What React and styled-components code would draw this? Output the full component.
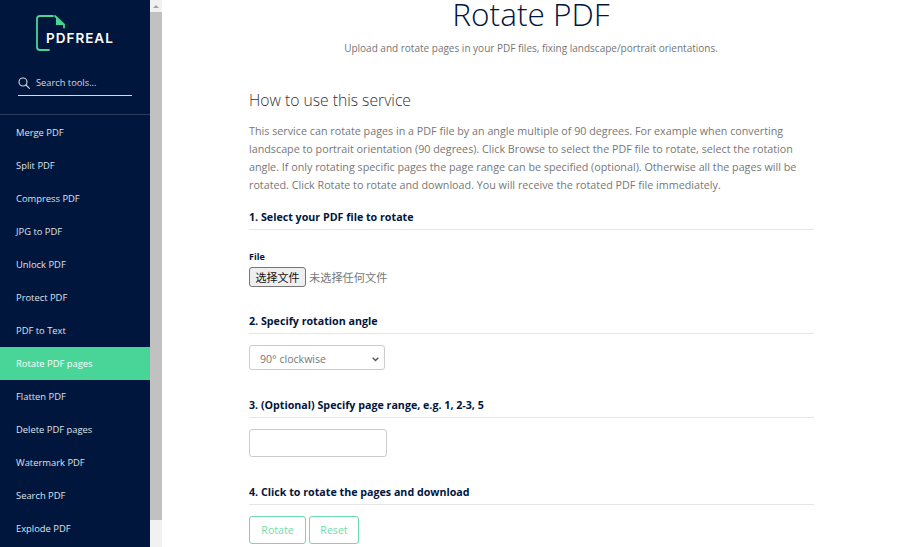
import React from 'react'
import styled, { createGlobalStyle } from 'styled-components'

const GlobalStyle = createGlobalStyle`
  html, body { margin: 0; padding: 0; height: 100%; overflow: hidden; background: #fff; }
  * { box-sizing: border-box; }
  body { font-family: "Open Sans", "Noto Sans", "Noto Sans CJK SC", sans-serif; }
`

const Page = styled.div`
  display: flex;
  width: 900px;
  height: 547px;
  overflow: hidden;
`

const Sidebar = styled.aside`
  width: 150px;
  flex: none;
  height: 547px;
  background: #01163d;
  overflow: hidden;
`

const Brand = styled.div`
  display: flex;
  padding: 15px 0 0 36px;
  height: 69px;
`

const LogoBox = styled.div`
  position: relative;
  width: 80px;
  height: 36px;
`

const LogoText = styled.span`
  position: absolute;
  left: 10px;
  top: 15px;
  font-family: "Inter", sans-serif;
  font-weight: 600;
  font-size: 13.5px;
  line-height: 16px;
  letter-spacing: 1px;
  color: #fff;
`

const SearchRow = styled.div`
  display: flex;
  align-items: center;
  gap: 6px;
  margin: 0 18px;
  height: 27px;
  padding-top: 1px;
  border-bottom: 1px solid #d5d9e2;
  color: #d5d9e2;
  font-size: 9.3px;
`

const Divider = styled.div`
  height: 1px;
  margin-top: 18px;
  background: #2b3c5c;
`

const NavList = styled.nav`
  display: flex;
  flex-direction: column;
  padding-top: 1px;
`

const NavItem = styled.a`
  display: flex;
  align-items: center;
  height: 33px;
  padding: 0 0 1px 16px;
  font-size: 9.4px;
  color: #dfe3ea;
  background: ${p => (p.$active ? '#48d597' : 'transparent')};
  ${p => p.$active && 'color: #fff;'}
`

const ScrollTrack = styled.div`
  width: 12px;
  flex: none;
  height: 547px;
  background: #f1f1f1;
  display: flex;
  flex-direction: column;
`

const ScrollArrow = styled.div`
  height: 12px;
  display: flex;
  align-items: center;
  justify-content: center;
  background: #f1f1f1;
  &::before {
    content: "";
    border-left: 3px solid transparent;
    border-right: 3px solid transparent;
    border-bottom: 3px solid #a3a3a3;
  }
`

const ScrollThumb = styled.div`
  height: 508px;
  background: #c1c1c1;
`

const Main = styled.main`
  flex: 1;
  height: 547px;
  overflow: hidden;
`

const Hero = styled.header`
  text-align: center;
  margin-top: -10px;
`

const Title = styled.h1`
  margin: 0;
  font-size: 31.6px;
  line-height: 48px;
  font-weight: 300;
  color: #01163d;
`

const Subtitle = styled.p`
  margin: 3px 0 0;
  font-size: 10px;
  line-height: 14px;
  color: #757575;
`

const Content = styled.div`
  width: 565px;
  margin-left: 87px;
`

const HowTitle = styled.h2`
  margin: 34px 0 0;
  font-size: 15.7px;
  line-height: 22px;
  font-weight: 300;
  color: #333;
`

const Description = styled.p`
  margin: 11px 0 0;
  font-size: 10.75px;
  line-height: 18px;
  color: #777;
`

const StepTitle = styled.h3`
  margin: ${p => p.$gap}px 0 0;
  padding-bottom: 5px;
  height: 20px;
  border-bottom: 1px solid #e6e6e6;
  font-size: 10.7px;
  line-height: 15px;
  font-weight: 700;
  color: #01163d;
`

const FieldLabel = styled.label`
  display: block;
  margin-top: 20px;
  font-size: 9px;
  line-height: 13px;
  font-weight: 700;
  color: #01163d;
`

const FileRow = styled.div`
  display: flex;
  align-items: center;
  gap: 3px;
  margin-top: 4px;
  height: 20px;
  font-size: 11.2px;
  color: #777;
  font-family: "Noto Sans CJK SC", sans-serif;
`

const FileButton = styled.button`
  width: 57px;
  height: 20px;
  padding: 0;
  border: 1px solid #767676;
  border-radius: 3px;
  background: #efefef;
  color: #111;
  font-size: 11px;
  font-family: "Noto Sans CJK SC", sans-serif;
`

const SelectBox = styled.div`
  display: flex;
  align-items: center;
  justify-content: space-between;
  width: 136px;
  height: 25px;
  margin-top: 11px;
  padding: 3px 5px 0 10px;
  border: 1px solid #ccc;
  border-radius: 3px;
  font-size: 10.6px;
  color: #777;
`

const TextBox = styled.input`
  display: block;
  width: 138px;
  height: 28px;
  margin-top: 11px;
  border: 1px solid #ccc;
  border-radius: 3px;
  background: #fff;
`

const Buttons = styled.div`
  display: flex;
  gap: 3px;
  margin-top: 11px;
`

const GhostButton = styled.button`
  width: ${p => p.$w}px;
  height: 28px;
  padding: 0;
  border: 1px solid #6fdcae;
  border-radius: 3px;
  background: #fff;
  color: #6fdcae;
  font-size: 10.6px;
  font-family: inherit;
`

const tools = [
  'Merge PDF', 'Split PDF', 'Compress PDF', 'JPG to PDF', 'Unlock PDF', 'Protect PDF', 'PDF to Text',
  'Rotate PDF pages', 'Flatten PDF', 'Delete PDF pages', 'Watermark PDF', 'Search PDF', 'Explode PDF',
]

export default function App() {
  return (
    <Page>
      <GlobalStyle />
      <Sidebar>
        <Brand>
          <LogoBox>
            <svg width="30" height="36" viewBox="0 0 30 36" fill="none">
              <path d="M17 1H4a3 3 0 0 0-3 3v28a3 3 0 0 0 3 3h9" stroke="#48d597" strokeWidth="1.8" strokeLinecap="round" />
              <path d="M19 1l9 8.5v3" stroke="#48d597" strokeWidth="1.8" strokeLinecap="round" />
              <path d="M20 2l8 8h-8z" fill="#48d597" />
            </svg>
            <LogoText>PDFREAL</LogoText>
          </LogoBox>
        </Brand>
        <SearchRow>
          <svg width="12" height="12" viewBox="0 0 12 12" fill="none" stroke="#d5d9e2" strokeWidth="1.1">
            <circle cx="5" cy="5" r="4" />
            <path d="M8 8l3.4 3.4" strokeLinecap="round" />
          </svg>
          Search tools...
        </SearchRow>
        <Divider />
        <NavList>
          {tools.map(t => (
            <NavItem key={t} $active={t === 'Rotate PDF pages'}>{t}</NavItem>
          ))}
        </NavList>
      </Sidebar>
      <ScrollTrack>
        <ScrollArrow />
        <ScrollThumb />
      </ScrollTrack>
      <Main>
        <Hero>
          <Title>Rotate PDF</Title>
          <Subtitle>Upload and rotate pages in your PDF files, fixing landscape/portrait orientations.</Subtitle>
        </Hero>
        <Content>
          <HowTitle>How to use this service</HowTitle>
          <Description>
            This service can rotate pages in a PDF file by an angle multiple of 90 degrees. For example when converting
            landscape to portrait orientation (90 degrees). Click Browse to select the PDF file to rotate, select the rotation
            angle. If only rotating specific pages the page range can be specified (optional). Otherwise all the pages will be
            rotated. Click Rotate to rotate and download. You will receive the rotated PDF file immediately.
          </Description>
          <StepTitle $gap={16}>1. Select your PDF file to rotate</StepTitle>
          <FieldLabel>File</FieldLabel>
          <FileRow>
            <FileButton>选择文件</FileButton>
            未选择任何文件
          </FileRow>
          <StepTitle $gap={27}>2. Specify rotation angle</StepTitle>
          <SelectBox>
            90° clockwise
            <svg width="7" height="5" viewBox="0 0 7 5" fill="none" stroke="#555" strokeWidth="1.4">
              <path d="M.7.8l2.8 2.8L6.3.8" />
            </svg>
          </SelectBox>
          <StepTitle $gap={28}>3. (Optional) Specify page range, e.g. 1, 2-3, 5</StepTitle>
          <TextBox />
          <StepTitle $gap={28}>4. Click to rotate the pages and download</StepTitle>
          <Buttons>
            <GhostButton $w={57}>Rotate</GhostButton>
            <GhostButton $w={50}>Reset</GhostButton>
          </Buttons>
        </Content>
      </Main>
    </Page>
  )
}
